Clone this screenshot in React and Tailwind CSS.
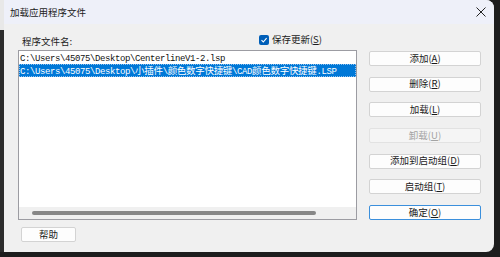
import React from "react";

const ui = { fontFamily: '"Noto Sans CJK SC", "Noto Sans", sans-serif' };
const mono = { fontFamily: '"Liberation Mono", "Noto Sans CJK SC", monospace' };

const Btn = ({ label, hot, disabled, primary }) => (
  <div
    className={`h-[15px] flex items-center justify-center rounded-[2px] border text-[9.5px] leading-none
      ${
        disabled
          ? "bg-[#f5f5f5] border-[#e2e2e2] text-[#a3a3a3]"
          : primary
          ? "bg-[#fdfdfd] border-[#3b8fdc] text-[#1a1a1a]"
          : "bg-[#fdfdfd] border-[#d3d3d3] text-[#1a1a1a]"
      }`}
  >
    {label}(<span className="underline">{hot}</span>)
  </div>
);

// path row, latin narrow mono + cjk chunks
const Path = ({ parts }) => (
  <span className="leading-none">
    {parts.map((p, i) =>
      /[\u4e00-\u9fff]/.test(p) ? (
        <span key={i} style={ui} className="text-[9.5px] tracking-[-0.3px]">
          {p}
        </span>
      ) : (
        <span key={i} className="text-[9px] tracking-[-0.4px]">
          {p}
        </span>
      )
    )}
  </span>
);

export default function App() {
  return (
    <div className="w-[500px] h-[257px] bg-[#1d1d1d] overflow-hidden" style={ui}>
      <div className="flex h-[252px]">
        {/* left strip of whatever is behind */}
        <div className="w-[4px] flex flex-col">
          <div className="h-[30px] bg-[#e8e8e8]" />
          <div className="flex-1 bg-[#2c2c2c]" />
        </div>

        <div className="w-[490px] h-[252px] bg-[#f0f0f0] rounded-r-[8px] overflow-hidden flex flex-col">
          {/* title bar */}
          <div className="h-[24px] bg-[#eef0f9] flex items-center justify-between pl-[6px] pr-[8px]">
            <span className="text-[9.5px] text-[#1b1b1b]">加载应用程序文件</span>
            <svg width="10" height="10" viewBox="0 0 10 10">
              <path d="M0.5 0.5 L9.5 9.5 M9.5 0.5 L0.5 9.5" stroke="#222" strokeWidth="1" />
            </svg>
          </div>

          <div className="flex pl-[14px]">
            {/* left column */}
            <div className="w-[339px] flex flex-col">
              <div className="h-[26px] flex items-end justify-between pb-[4px]">
                <span className="ml-[4px] text-[9.5px] leading-none text-[#1b1b1b]">程序文件名:</span>
                <div className="flex items-center gap-[3px] mr-[35px] mb-[1px]">
                  <div className="w-[10px] h-[10px] rounded-[2px] bg-[#005fb8] flex items-center justify-center">
                    <svg width="8" height="8" viewBox="0 0 8 8">
                      <path d="M1.5 4.2 L3.3 6 L6.6 2.2" stroke="#fff" strokeWidth="1.1" fill="none" />
                    </svg>
                  </div>
                  <span className="text-[9.5px] leading-none text-[#1b1b1b]">
                    保存更新(<span className="underline">S</span>)
                  </span>
                </div>
              </div>

              {/* list box */}
              <div className="h-[170px] border border-[#9c9ca2] bg-white flex flex-col" style={mono}>
                <div className="flex-1 flex flex-col">
                  <div className="h-[12.5px] flex items-center pl-[1px] text-[#111] whitespace-nowrap">
                    <Path parts={["C:\\Users\\45075\\Desktop\\CenterlineV1-2.lsp"]} />
                  </div>
                  <div className="h-[13px] flex items-center bg-[#0078d7] text-white whitespace-nowrap border border-dotted border-[#8fc0ee]">
                    <Path
                      parts={[
                        "C:\\Users\\45075\\Desktop\\",
                        "小插件",
                        "\\",
                        "颜色数字快捷键",
                        "\\CAD",
                        "颜色数字快捷键",
                        ".LSP",
                      ]}
                    />
                  </div>
                </div>
                {/* horizontal scrollbar */}
                <div className="h-[12px] bg-[#f0f0f0] flex items-center pl-[13px]">
                  <div className="w-[284px] h-[4px] rounded-full bg-[#878787]" />
                </div>
              </div>

              <div className="mt-[7px] ml-[3px] w-[55px] h-[15px] flex items-center justify-center rounded-[2px] border border-[#d3d3d3] bg-[#fdfdfd] text-[9.5px] text-[#1a1a1a]">
                帮助
              </div>
            </div>

            {/* right buttons */}
            <div className="ml-[12px] w-[112px] pt-[27px] flex flex-col gap-[10.67px]">
              <Btn label="添加" hot="A" />
              <Btn label="删除" hot="R" />
              <Btn label="加载" hot="L" />
              <Btn label="卸载" hot="U" disabled />
              <Btn label="添加到启动组" hot="D" />
              <Btn label="启动组" hot="T" />
              <Btn label="确定" hot="O" primary />
            </div>
          </div>
        </div>
      </div>
    </div>
  );
}
